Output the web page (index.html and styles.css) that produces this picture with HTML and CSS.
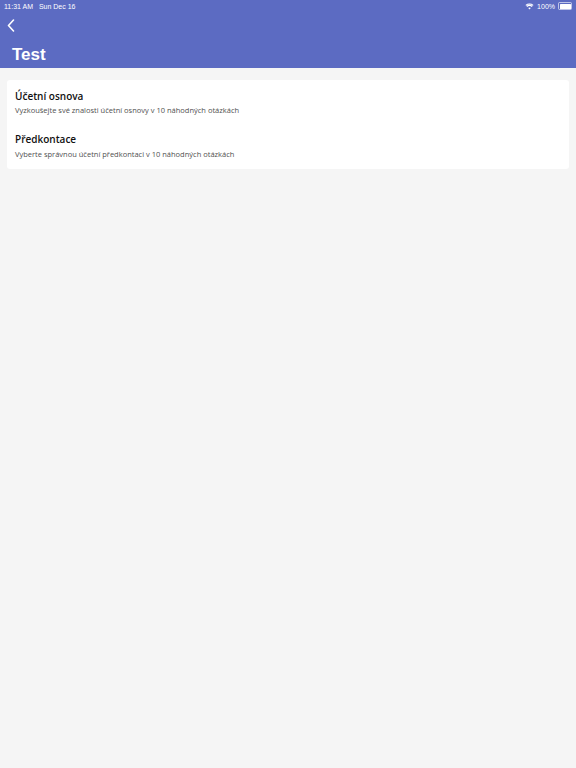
FILE: index.html
```html
<!DOCTYPE html>
<html lang="cs">
<head>
<meta charset="utf-8">
<link rel="stylesheet" href="styles.css">
</head>
<body>
<header class="appbar">
  <div class="status">
    <div class="status-left">11:31 AM&nbsp;&nbsp;&nbsp;Sun Dec 16</div>
    <div class="status-right">
      <svg class="wifi" width="9" height="7" viewBox="0 0 18 13"><path d="M9 12.5l2.6-3.1a4 4 0 0 0-5.2 0z M9 5.6a7 7 0 0 1 4.6 1.7l1.5-1.8A9.4 9.4 0 0 0 9 3.2a9.4 9.4 0 0 0-6.1 2.3l1.5 1.8A7 7 0 0 1 9 5.6z M9 0.5A12.3 12.3 0 0 0 1 3.4l1.3 1.5A10.3 10.3 0 0 1 9 2.4a10.3 10.3 0 0 1 6.7 2.5L17 3.4A12.3 12.3 0 0 0 9 0.5z" fill="#fff"/></svg>
      <span>100%</span>
      <span class="battery"><span class="battery-fill"></span></span>
    </div>
  </div>
  <div class="nav">
    <svg class="back" width="8" height="13" viewBox="0 0 8 13"><path d="M6.5 1L1.5 6.5l5 5.5" fill="none" stroke="#fff" stroke-width="1.6" stroke-linecap="round" stroke-linejoin="round"/></svg>
  </div>
  <h1 class="title">Test</h1>
</header>
<main class="content">
  <section class="card">
    <div class="item">
      <div class="item-title">Účetní osnova</div>
      <div class="item-sub">Vyzkoušejte své znalosti účetní osnovy v 10 náhodných otázkách</div>
    </div>
    <div class="item">
      <div class="item-title">Předkontace</div>
      <div class="item-sub">Vyberte správnou účetní předkontaci v 10 náhodných otázkách</div>
    </div>
  </section>
</main>
</body>
</html>
```
FILE: styles.css
```css
html, body {
  margin: 0;
  padding: 0;
}
body {
  background: #f5f5f5;
  font-family: "Open Sans", "Noto Sans", sans-serif;
  width: 576px;
  height: 768px;
  overflow: hidden;
}
.appbar {
  background: #5c6bc2;
  height: 68px;
  color: #fff;
  display: flex;
  flex-direction: column;
}
.status {
  height: 12px;
  display: flex;
  justify-content: space-between;
  align-items: center;
  padding: 0 4px 0 4px;
  font-family: "Liberation Sans", sans-serif;
  font-size: 7px;
  font-weight: 400;
}
.status-right {
  display: flex;
  align-items: center;
  gap: 3px;
}
.battery {
  width: 11px;
  height: 5px;
  border: 1px solid rgba(255,255,255,0.6);
  border-radius: 1.5px;
  padding: 0.5px;
  display: flex;
}
.battery-fill {
  flex: 1;
  background: #fff;
  border-radius: 0.5px;
}
.nav {
  height: 33px;
  display: flex;
  align-items: center;
  padding-left: 7px;
  padding-bottom: 6px;
  box-sizing: border-box;
}
.back {
  display: block;
}
.title {
  margin: 0;
  padding-left: 12px;
  font-family: "Liberation Sans", sans-serif;
  font-size: 17px;
  font-weight: 700;
  line-height: 20px;
}
.content {
  padding: 12px 7px 0 7px;
}
.card {
  background: #fff;
  border-radius: 3px;
  padding: 8.5px 0 9px 0;
  display: flex;
  flex-direction: column;
  gap: 16px;
}
.item {
  padding: 0 8px;
}
.item-title {
  font-size: 10px;
  font-weight: 600;
  color: #111;
  line-height: 14px;
}
.item-sub {
  font-size: 7.5px;
  color: #505050;
  line-height: 12px;
  margin-top: 1.5px;
}
```
